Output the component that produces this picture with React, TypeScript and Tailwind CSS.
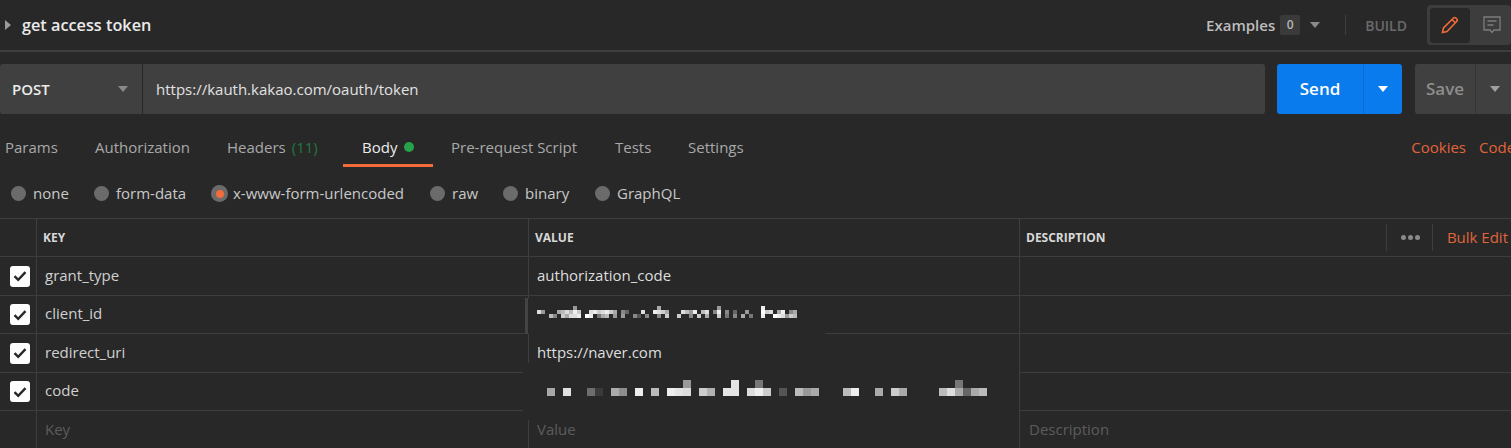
import React from 'react';

const tabs = [
  { label: 'Params', w: 'w-[90px]' },
  { label: 'Authorization', w: 'w-[132px]' },
  { label: 'Headers', w: 'w-[135px]', count: '(11)' },
  { label: 'Body', w: 'w-[89px]', active: true },
  { label: 'Pre-request Script', w: 'w-[164px]' },
  { label: 'Tests', w: 'w-[73px]' },
  { label: 'Settings', w: 'w-[80px]' },
];

const radios = [
  { label: 'none', w: 'w-[83px]' },
  { label: 'form-data', w: 'w-[117px]' },
  { label: 'x-www-form-urlencoded', w: 'w-[219px]', on: true },
  { label: 'raw', w: 'w-[73px]' },
  { label: 'binary', w: 'w-[92px]' },
  { label: 'GraphQL', w: 'w-[90px]' },
];

const rows = [
  { key: 'grant_type', value: 'authorization_code', h: 'h-[39px]' },
  { key: 'client_id', value: '', h: 'h-[38px]' },
  { key: 'redirect_uri', value: 'https://naver.com', h: 'h-[39px]' },
  { key: 'code', value: '', h: 'h-[38px]' },
];

// mosaic pixels of the redacted values: [x, y, shade]
const clientIdPixels: [number, number, string][] = [
  [0, 1, '#ddd'], [1, 1, '#999'], [3, 2, '#bbb'], [4, 2, '#888'], [5, 1, '#aaa'], [6, 1, '#bbb'], [6, 2, '#ccc'], [7, 1, '#ddd'], [7, 2, '#aaa'],
  [8, 1, '#bbb'], [8, 2, '#ddd'], [9, 0, '#999'], [9, 1, '#eee'], [9, 2, '#ddd'], [10, 1, '#ccc'], [10, 2, '#eee'],
  [12, 2, '#fff'], [13, 1, '#ddd'], [13, 2, '#eee'], [14, 1, '#eee'], [15, 1, '#ccc'], [15, 2, '#777'], [16, 1, '#ddd'], [16, 2, '#aaa'], [17, 1, '#eee'], [17, 2, '#bbb'],
  [18, 1, '#ccc'], [19, 1, '#aaa'], [19, 2, '#999'], [21, 1, '#888'], [21, 2, '#999'], [22, 1, '#666'], [24, 2, '#888'], [25, 2, '#555'], [26, 1, '#ddd'], [27, 2, '#888'], [29, 1, '#eee'],
  [30, 0, '#aaa'], [30, 1, '#ddd'], [30, 2, '#888'], [31, 1, '#ccc'], [32, 1, '#aaa'], [32, 2, '#ccc'],
  [35, 2, '#ccc'], [36, 1, '#ddd'], [37, 1, '#bbb'], [38, 1, '#999'], [38, 2, '#888'], [39, 1, '#eee'], [40, 2, '#ccc'], [41, 1, '#bbb'], [42, 1, '#ddd'], [42, 2, '#aaa'],
  [44, 1, '#888'], [45, 0, '#999'], [45, 1, '#eee'], [45, 2, '#ccc'], [47, 1, '#888'], [47, 2, '#777'], [49, 1, '#666'], [49, 2, '#888'],
  [51, 2, '#aaa'], [52, 1, '#999'], [53, 2, '#777'],
  [56, 0, '#eee'], [56, 1, '#fff'], [56, 2, '#eee'], [57, 1, '#ccc'], [58, 1, '#ddd'], [59, 2, '#fff'], [60, 1, '#aaa'], [60, 2, '#eee'], [61, 1, '#eee'], [61, 2, '#ddd'], [62, 2, '#999'], [63, 1, '#888'], [63, 2, '#ccc'], [64, 1, '#aaa'], [64, 2, '#bbb'],
];

const codePixels: [number, number, string][] = [
  [0, 1, '#a8a8a8'], [2, 1, '#e0e0e0'], [5, 1, '#6e6e6e'], [6, 1, '#3a3a3a'], [8, 1, '#aaa'], [9, 1, '#8e8e8e'], [11, 1, '#eee'], [13, 1, '#bbb'],
  [15, 1, '#eee'], [16, 1, '#e4e4e4'], [17, 0, '#999'], [17, 1, '#ddd'], [19, 1, '#ccc'], [20, 1, '#b0b0b0'], [22, 1, '#e4e4e4'], [23, 0, '#e4e4e4'],
  [23, 1, '#e4e4e4'], [25, 1, '#ddd'], [26, 0, '#777'], [26, 1, '#eee'], [27, 1, '#ccc'], [29, 1, '#555'], [31, 1, '#bbb'], [32, 1, '#999'], [33, 1, '#aaa'],
  [37, 1, '#bbb'], [38, 1, '#eee'], [41, 1, '#aaa'], [43, 1, '#ccc'], [44, 1, '#aaa'], [49, 1, '#bbb'], [50, 1, '#ddd'], [51, 0, '#777'], [51, 1, '#aaa'],
  [52, 1, '#666'], [53, 1, '#aaa'], [54, 1, '#bbb'],
];

function Caret({ color = '#8a8a8a' }: { color?: string }) {
  return (
    <svg width="10" height="6" viewBox="0 0 10 6" className="shrink-0">
      <path d="M0 0h10L5 6z" fill={color} />
    </svg>
  );
}

function Check() {
  return (
    <div className="flex h-[21px] w-5 items-center justify-center rounded-[3px] bg-white">
      <svg width="14" height="12" viewBox="0 0 14 12">
        <path d="M1.5 6.2 5.2 9.8 12.5 2.2" fill="none" stroke="#282828" strokeWidth="2.4" />
      </svg>
    </div>
  );
}

export default function App() {
  return (
    <div className="h-[448px] w-[1511px] overflow-hidden bg-[#282828] text-[15px] text-[#c4c4c4] [font-family:'Open_Sans',sans-serif]">
      {/* request title */}
      <div className="flex h-[52px] items-center border-b-2 border-[#3e3e3e]">
        <svg width="6" height="10" viewBox="0 0 6 10" className="ml-[5px] shrink-0">
          <path d="M0 0v10l6-5z" fill="#9a9a9a" />
        </svg>
        <div className="ml-[11px] text-[16.25px] font-semibold text-[#eaeaea]">get access token</div>
        <div className="ml-auto flex items-center">
          <span className="text-[15px] font-semibold text-[#bdbdbd]">Examples</span>
          <span className="ml-[5px] flex h-5 w-5 items-center justify-center rounded-[2px] bg-[#3a3a3a] text-[12px] font-semibold text-[#b5b5b5]">0</span>
          <span className="ml-[10px]"><Caret /></span>
          <span className="ml-[25px] h-5 w-px bg-[#3e3e3e]" />
          <span className="ml-[19px] text-[14px] font-semibold text-[#6a6a6a]">BUILD</span>
          <div className="ml-5 flex h-[40px] w-[84px] items-center rounded-[4px] bg-[#3d3d3d] p-[3px]">
            <div className="flex h-[35px] w-10 items-center justify-center rounded-[3px] bg-[#282828]">
              <svg width="18" height="18" viewBox="0 0 18 18" fill="none" stroke="#f26b3a" strokeWidth="1.6">
                <path d="M1.5 16.5 2.5 12 12.5 2a1.6 1.6 0 0 1 2.3 0l1 1a1.6 1.6 0 0 1 0 2.3L6 15.5z" />
                <path d="M11 3.5 14.5 7" />
              </svg>
            </div>
            <div className="flex flex-1 justify-center pl-[6px]">
              <svg width="18" height="18" viewBox="0 0 18 18" fill="none" stroke="#7c7c7c" strokeWidth="1.3">
                <path d="M1 1h16v13h-6l-2 2.5L7 14H1z" />
                <path d="M4.5 5h9M4.5 9h6" />
              </svg>
            </div>
          </div>
        </div>
      </div>

      {/* url bar */}
      <div className="mt-3 flex h-[50px] items-stretch">
        <div className="flex w-[142px] shrink-0 items-center rounded-l-[3px] bg-[#404040] pl-3 pr-[14px]">
          <span className="text-[15px] font-semibold text-[#ececec]">POST</span>
          <span className="ml-auto"><Caret /></span>
        </div>
        <div className="ml-px flex w-[1122px] shrink-0 items-center rounded-r-[3px] bg-[#404040] pl-[13px] text-[15px] text-[#e2e2e2]">
          https://kauth.kakao.com/oauth/token
        </div>
        <div className="ml-3 flex w-[125px] shrink-0 rounded-[3px] bg-[#097bed]">
          <div className="flex w-[87px] items-center justify-center border-r border-[#0a6cd0] text-[17px] font-semibold text-white">Send</div>
          <div className="flex flex-1 items-center justify-center"><Caret color="#ffffff" /></div>
        </div>
        <div className="ml-[13px] flex w-[110px] shrink-0 rounded-[3px] bg-[#404040]">
          <div className="flex w-[61px] items-center justify-center border-r border-[#353535] text-[17px] font-semibold text-[#8e8e8e]">Save</div>
          <div className="flex flex-1 items-center pl-[14px]"><Caret color="#a0a0a0" /></div>
        </div>
      </div>

      {/* request tabs */}
      <div className="mt-[14px] flex h-[39px] items-stretch whitespace-nowrap pl-[5px] pr-0">
        {tabs.map((t) => (
          <div key={t.label} className={`relative flex items-center pb-px ${t.w} shrink-0 ${t.active ? 'text-[#ececec]' : 'text-[#a8a8a8]'}`}>
            <span>{t.label}</span>
            {t.count && <span className="ml-[6px] text-[#1f7a3d]">{t.count}</span>}
            {t.active && <span className="ml-[7px] h-[10px] w-[10px] rounded-full bg-[#26a34a]" />}
            {t.active && <span className="absolute bottom-0 left-[-19px] h-[3px] w-[90px] bg-[#f26b3a]" />}
          </div>
        ))}
        <div className="ml-auto flex items-center gap-[13px] pb-px text-[#e0643a]">
          <span>Cookies</span>
          <span className="w-[32px] shrink-0">Code</span>
        </div>
      </div>

      {/* body type */}
      <div className="flex h-[51px] items-center pl-[11px] pt-[2px]">
        {radios.map((r) => (
          <div key={r.label} className={`flex shrink-0 items-center gap-[7px] ${r.w}`}>
            <span className={`flex items-center justify-center rounded-full bg-[#6b6b6b] ${r.on ? 'h-[17px] w-[17px]' : 'h-[15px] w-[15px]'}`}>
              {r.on && <span className="h-2 w-2 rounded-full bg-[#f26b3a]" />}
            </span>
            <span className={r.on ? 'ml-[-2px] text-[#c8c8c8]' : 'text-[#c8c8c8]'}>{r.label}</span>
          </div>
        ))}
      </div>

      {/* key / value table */}
      <div className="relative border-t border-[#3e3e3e]">
        <div className="grid h-[38px] grid-cols-[37px_492px_491px_491px] border-b border-[#3e3e3e] text-[12px] font-bold text-[#d8d8d8]">
          <div className="border-r border-[#3e3e3e]" />
          <div className="flex items-center border-r border-[#3e3e3e] pl-[6px]">KEY</div>
          <div className="flex items-center border-r border-[#3e3e3e] pl-[6px]">VALUE</div>
          <div className="flex items-center pl-[6px]">
            DESCRIPTION
            <div className="ml-auto mr-[3px] flex h-[27px] items-center">
              <div className="flex h-full w-[46px] items-center justify-center gap-[2px] border-l border-[#3e3e3e] pl-[2px]">
                <span className="h-[5px] w-[5px] rounded-full bg-[#8a8a8a]" />
                <span className="h-[5px] w-[5px] rounded-full bg-[#8a8a8a]" />
                <span className="h-[5px] w-[5px] rounded-full bg-[#8a8a8a]" />
              </div>
              <div className="flex h-full items-center border-l border-[#3e3e3e] pl-[14px] text-[15px] font-normal text-[#e0643a]">Bulk Edit</div>
            </div>
          </div>
        </div>
        {rows.map((r) => (
          <div key={r.key} className={`grid grid-cols-[37px_492px_491px_491px] border-b border-[#3e3e3e] ${r.h}`}>
            <div className="flex items-center border-r border-[#3e3e3e] pl-[10px]"><Check /></div>
            <div className="flex items-center border-r border-[#3e3e3e] pb-[2px] pl-2 text-[#d0d0d0]">{r.key}</div>
            <div className="flex items-center border-r border-[#3e3e3e] pb-[2px] pl-2 text-[#dedede]">{r.value}</div>
            <div />
          </div>
        ))}
        <div className="grid h-[38px] grid-cols-[37px_492px_491px_491px] text-[#5c5c5c]">
          <div className="border-r border-[#3e3e3e]" />
          <div className="flex items-center border-r border-[#3e3e3e] pb-[2px] pl-2">Key</div>
          <div className="flex items-center border-r border-[#3e3e3e] pb-[2px] pl-2">Value</div>
          <div className="flex items-center pb-[2px] pl-[9px]">Description</div>
        </div>

        {/* redaction over client_id */}
        <div className="absolute left-[525px] top-[79px] h-[36px] w-[300px] bg-[#282828]">
          <div className="h-full w-[3px] bg-[#444444]" />
          <svg width="270" height="14" viewBox="0 0 270 14" className="absolute left-[12px] top-[8px]">
            {clientIdPixels.map(([x, y, c], i) => (
              <rect key={i} x={x * 4} y={y * 4} width="4" height="4" fill={c} />
            ))}
          </svg>
        </div>

        {/* redaction over code */}
        <div className="absolute left-[523px] top-[144px] h-[57px] w-[496px] bg-[#282828]">
          <svg width="450" height="16" viewBox="0 0 450 16" className="absolute left-[24px] top-[17px]">
            {codePixels.map(([x, y, c], i) => (
              <rect key={i} x={x * 8} y={y * 8} width="8" height="8" fill={c} />
            ))}
          </svg>
        </div>
      </div>
    </div>
  );
}
